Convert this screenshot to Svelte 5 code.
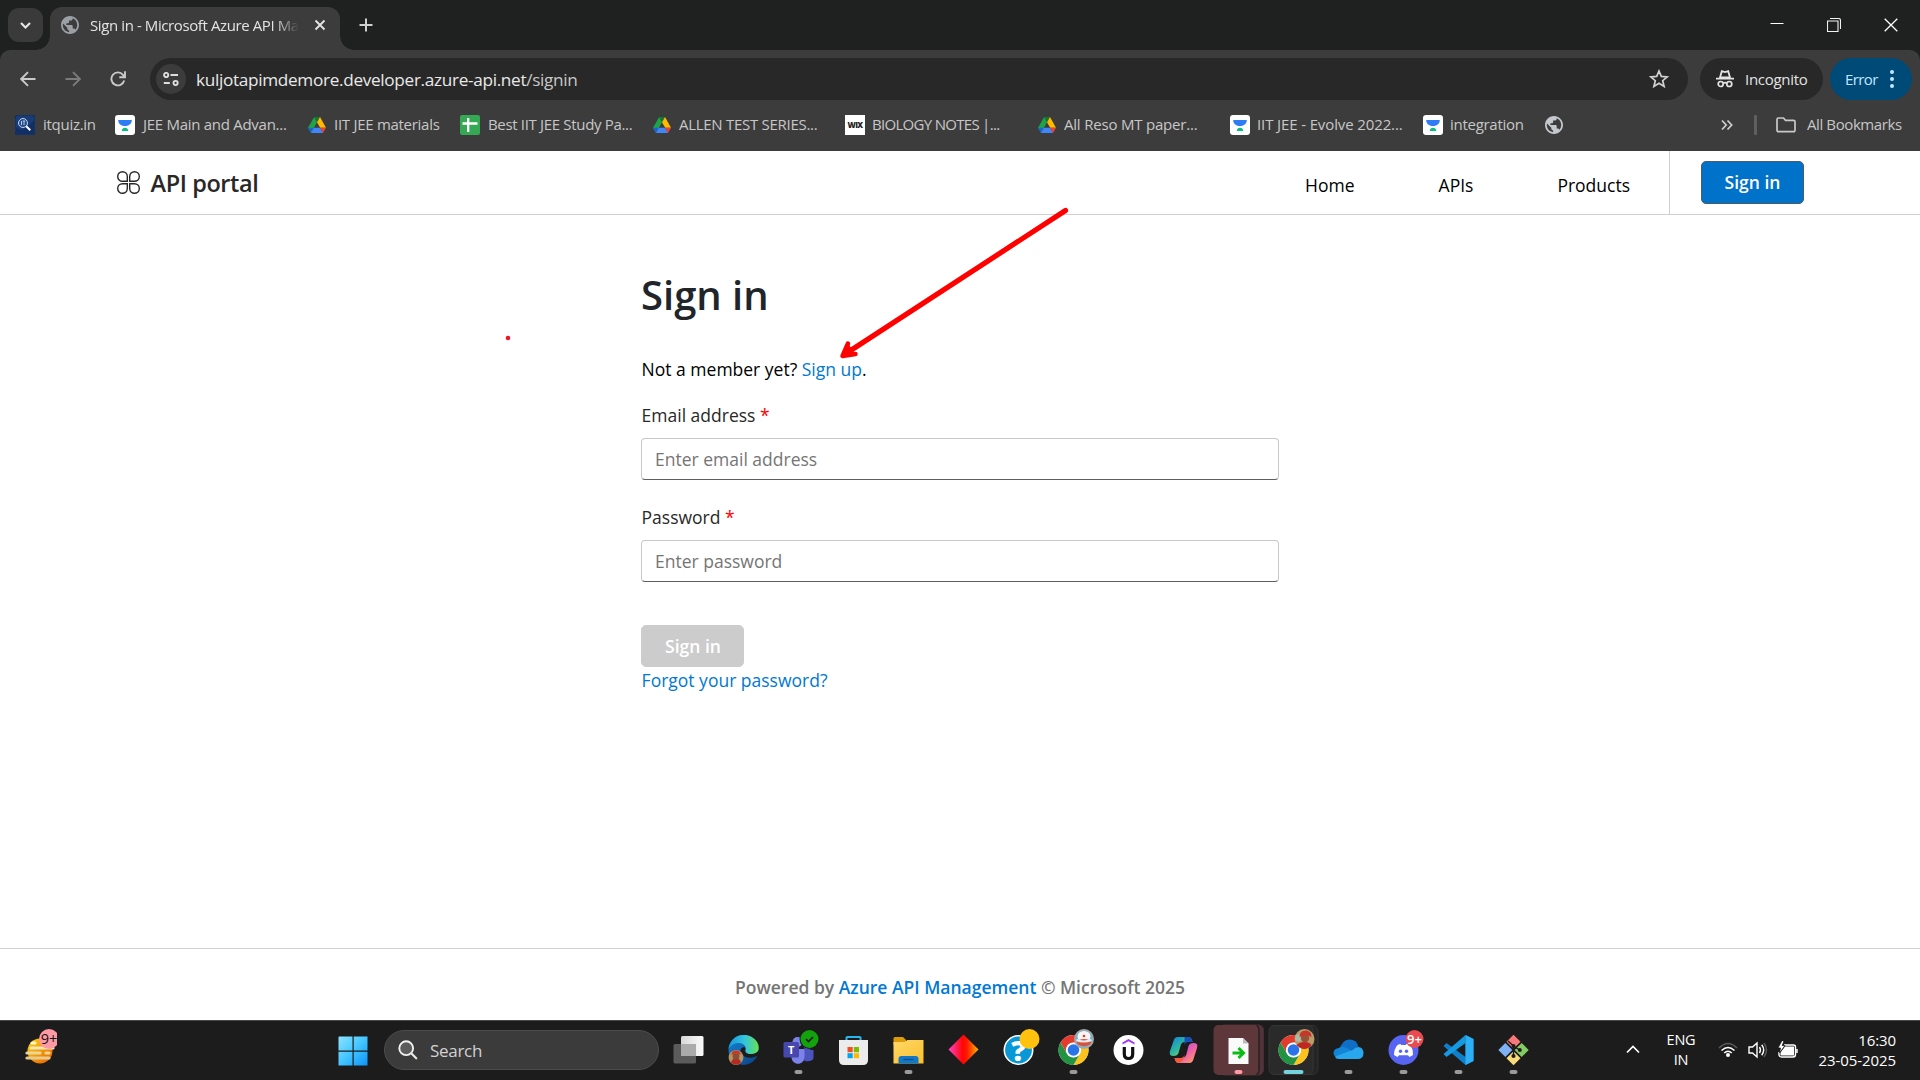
<script>
  const bookmarks = [
    { icon: 'quiz', label: 'itquiz.in' },
    { icon: 'academy', label: 'JEE Main and Advan...' },
    { icon: 'drive', label: 'IIT JEE materials' },
    { icon: 'sheet', label: 'Best IIT JEE Study Pa...' },
    { icon: 'drive', label: 'ALLEN TEST SERIES...' },
    { icon: 'wix', label: 'BIOLOGY NOTES |...' },
    { icon: 'drive', label: 'All Reso MT paper...' },
    { icon: 'academy', label: 'IIT JEE - Evolve 2022...' },
    { icon: 'academy', label: 'integration' },
    { icon: 'globe', label: '' }
  ];
  const apps = [
    { name: 'taskview' },
    { name: 'edge' },
    { name: 'teams', open: true },
    { name: 'store' },
    { name: 'explorer', open: true },
    { name: 'diamond' },
    { name: 'help' },
    { name: 'chrome', open: true },
    { name: 'udemy' },
    { name: 'copilot' },
    { name: 'transfer', alert: true },
    { name: 'chromeActive', active: true },
    { name: 'onedrive', open: true },
    { name: 'discord', open: true },
    { name: 'vscode', open: true },
    { name: 'git', open: true }
  ];
  const links = ['Home', 'APIs', 'Products'];
</script>

{#snippet globe(color)}
  <svg class="i18" viewBox="2 2 20 20">
    <path d="M12 2C6.480 2 2 6.480 2 12s4.480 10 10 10 10-4.480 10-10S17.520 2 12 2zm-1 17.930c-3.950-.49-7-3.850-7-7.930 0-.62.080-1.210.210-1.790L9 15v1c0 1.100.9 2 2 2v1.930zm6.900-2.540c-.26-.81-1-1.390-1.900-1.390h-1v-3c0-.55-.45-1-1-1H8v-2h2c.55 0 1-.45 1-1V7h2c1.100 0 2-.9 2-2v-.41c2.930 1.190 5 4.060 5 7.410 0 2.080-.8 3.970-2.100 5.390z" fill={color} />
  </svg>
{/snippet}

{#snippet chromeMark()}
  <circle r="15" fill="#fff" />
  <path d="M-13-7.500A15 15 0 0 1 13-7.500H0A7.500 7.500 0 0 0-6.500 3.750Z" fill="#e33b2e" />
  <path d="M13-7.500A15 15 0 0 1 0 15L6.500 3.750A7.500 7.500 0 0 0 0-7.500Z" fill="#fcc31e" />
  <path d="M0 15A15 15 0 0 1-13-7.500L-6.500 3.750A7.500 7.500 0 0 0 6.500 3.750Z" fill="#229342" />
  <circle r="7.300" fill="#fff" /><circle r="5.800" fill="#2b74e8" />
{/snippet}

<div class="screen">
  <div class="tabs">
    <div class="tabsearch"><svg width="11" height="7" viewBox="0 0 11 7"><path d="m1 1 4.500 4.500L10 1" fill="none" stroke="#e6e6e6" stroke-width="2.100" /></svg></div>
    <div class="tab">
      {@render globe('#9aa0a6')}
      <span class="tabtitle">Sign in - Microsoft Azure API Ma</span>
      <svg class="close" width="12" height="12" viewBox="0 0 12 12"><path d="m1.500 1.500 9 9m0-9-9 9" stroke="#e3e3e3" stroke-width="1.900" /></svg>
    </div>
    <svg class="plus" width="14" height="14" viewBox="0 0 14 14"><path d="M7 .5v13M.5 7h13" stroke="#d0d0d0" stroke-width="2" /></svg>
    <div class="winctl">
      <svg width="14" height="14" viewBox="0 0 14 14"><path d="M.5 5.500h13" stroke="#fff" /></svg>
      <svg width="14" height="14" viewBox="0 0 14 14"><path d="M.5 3h10.500v10.500H.5ZM3 .5h8.500q2 0 2 2V11" fill="none" stroke="#f2f2f2" stroke-width="1.100" /></svg>
      <svg width="14" height="14" viewBox="0 0 14 14"><path d="m.7.7 12.600 12.600m0-12.600L.7 13.300" stroke="#fff" stroke-width="1.300" /></svg>
    </div>
  </div>

  <div class="toolbarback">
    <div class="toolbar">
      <svg class="nav" viewBox="0 0 16 16"><path d="M15.500 8H1.500M8 1.200 1.200 8 8 14.800" fill="none" stroke="#c9c9c9" stroke-width="1.900" /></svg>
      <svg class="nav" viewBox="0 0 16 16"><path d="M.5 8h14M8 1.200 14.800 8 8 14.800" fill="none" stroke="#7b7b7b" stroke-width="1.900" /></svg>
      <svg class="nav" viewBox="0 0 16 16"><path d="M14.200 9.500A6.500 6.500 0 1 1 13 3.800L14.500 6M9.300 6.200H15V.3" fill="none" stroke="#c9c9c9" stroke-width="1.900" /></svg>
      <div class="omnibox">
        <div class="site"><svg width="16" height="14" viewBox="0 0 16 14"><g fill="none" stroke="#dedede" stroke-width="1.900"><circle cx="3.200" cy="3" r="2.100" /><path d="M7.500 3H15M.8 11h6" /><circle cx="12.600" cy="11" r="2.100" /></g></svg></div>
        <span class="url">kuljotapimdemore.developer.azure-api.net<i>/signin</i></span>
        <svg class="star" width="20" height="20" viewBox="0 0 20 20"><path d="m10 2 2.300 5.400 5.900.5-4.500 3.800 1.400 5.700L10 14.300l-5.100 3.100 1.400-5.700L1.800 7.900l5.900-.5Z" fill="none" stroke="#d2d2d2" stroke-width="1.700" /></svg>
      </div>
      <div class="incog">
        <svg width="18" height="18" viewBox="0 0 18 18"><path d="M4 7.500 5.800 1.200 9 2l3.200-.8L14 7.500Z" fill="none" stroke="#e3e3e3" stroke-width="1.800" /><path d="M0 8.700h18M7 13.400q2-1.400 4 0" fill="none" stroke="#e3e3e3" stroke-width="1.800" /><circle cx="4.700" cy="14" r="2.500" fill="none" stroke="#e3e3e3" stroke-width="1.700" /><circle cx="13.300" cy="14" r="2.500" fill="none" stroke="#e3e3e3" stroke-width="1.700" /></svg>
        <span>Incognito</span>
      </div>
      <div class="error"><span>Error</span><svg width="4" height="18" viewBox="0 0 4 18" fill="#c2e7ff"><circle cx="2" cy="2" r="2" /><circle cx="2" cy="9" r="2" /><circle cx="2" cy="16" r="2" /></svg></div>
    </div>
    <div class="bookmarks">
      <div class="bmgrid">
        {#each bookmarks as b}
          <div class="bm">
            {#if b.icon === 'globe'}
              {@render globe('#c4c7cb')}
            {:else if b.icon === 'drive'}
              <svg class="i18" viewBox="0 0 18 18"><path d="M6.200 1 0 11.800 3 17 9 6.300Z" fill="#1ea446" /><path d="M6.200 1h5.800L9 6.300Z" fill="#0d7a34" /><path d="M12 1 9 6.300 12.200 11.800H18Z" fill="#ffba00" /><path d="M0 11.800 3 17 5.900 11.800Z" fill="#1b62d2" /><path d="M5.900 11.800H12.200L15 17H3Z" fill="#4285f4" /><path d="M12.200 11.800H18L15 17Z" fill="#ea4335" /></svg>
            {:else}
              <svg class="i20" viewBox="0 0 20 20">
                {#if b.icon === 'quiz'}
                  <rect width="20" height="20" rx="3" fill="#183c78" stroke="#112b57" /><path d="M1 12Q8 20 19 5v12q0 2-2 2H3q-2 0-2-2Z" fill="#122f63" />
                  <circle cx="8" cy="8" r="4.500" fill="#234d8b" stroke="#c6d3e8" stroke-width="1" /><path d="m11.300 11.300 4 4" stroke="#fff" stroke-width="2" /><path d="M6.500 6v4M9 6v4M7.800 6h2.500" stroke="#dfe7f3" stroke-width=".8" />
                {:else if b.icon === 'academy'}
                  <rect width="20" height="20" rx="3" fill="#fff" /><path d="M3.200 5h13.600c0 3.500-2.500 6-6.800 6s-6.800-2.500-6.800-6Z" fill="#2e7df6" /><path d="M6.700 16c.3-4.300 6.300-4.300 6.600 0Z" fill="#09bd83" />
                {:else if b.icon === 'sheet'}
                  <rect width="20" height="20" rx="2" fill="#34a853" /><path d="M8.200 3v14M2.500 8.500h15" stroke="#fff" stroke-width="2.300" />
                {:else}
                  <rect width="20" height="20" fill="#fff" /><text x="10" y="13" text-anchor="middle" class="wix">WIX</text>
                {/if}
              </svg>
            {/if}
            <span>{b.label}</span>
          </div>
        {/each}
      </div>
      <svg width="12" height="12" viewBox="0 0 12 12"><path d="m1 1.500 4.200 4.500L1 10.500m5.500-9L10.700 6l-4.200 4.500" fill="none" stroke="#cfcfcf" stroke-width="1.700" /></svg>
      <b class="divider"></b>
      <svg width="20" height="16" viewBox="0 0 20 16"><path d="M1 13V2.500Q1 1 2.500 1h5l2 2.300h8Q19 3.300 19 4.800V13q0 1.700-1.700 1.700H2.700Q1 14.700 1 13Z" fill="none" stroke="#c9c9c9" stroke-width="1.700" /></svg>
      <span class="allbm">All Bookmarks</span>
    </div>
  </div>

  <header>
    <svg class="logo" width="23" height="23" viewBox="0 0 23 23"><g fill="none" stroke="#292827" stroke-width="1.400"><path d="M10.300 10.300H5.500A4.800 4.800 0 1 1 10.300 5.500Z" /><path d="M12.700 10.300V5.500A4.800 4.800 0 1 1 17.500 10.300Z" /><path d="M10.300 12.700v4.800A4.800 4.800 0 1 1 5.500 12.700Z" /><path d="M12.700 12.700h4.800A4.800 4.800 0 1 1 12.700 17.500Z" /></g></svg>
    <span class="brand">API portal</span>
    <nav>{#each links as l}<a href="#{l}">{l}</a>{/each}</nav>
    <div class="account"><button class="primary">Sign in</button></div>
  </header>

  <main>
    <form>
      <h1>Sign in</h1>
      <p class="member">Not a member yet? <a href="#signup">Sign up</a>.</p>
      <label for="email">Email address <em>*</em></label>
      <input id="email" placeholder="Enter email address" />
      <label for="pw" class="second">Password <em>*</em></label>
      <input id="pw" placeholder="Enter password" />
      <button type="button" class="muted">Sign in</button>
      <a class="forgot" href="#forgot">Forgot your password?</a>
    </form>
  </main>

  <footer><span>Powered by <a href="#azure">Azure API Management</a> © Microsoft 2025</span></footer>

  <div class="taskbar">
    <svg class="widget" width="32" height="38" viewBox="0 0 32 38">
      <defs><linearGradient id="sun" x1="0" y1="0" x2="1" y2="1"><stop offset="0" stop-color="#ffd60a" /><stop offset="1" stop-color="#e85d04" /></linearGradient></defs>
      <circle cx="15" cy="22" r="12.500" fill="url(#sun)" />
      <g stroke-linecap="round" stroke-width="3.200" stroke="#f4e6b8"><path d="M7 14h3" stroke="#fff7c8" /><path d="M6 19h22" /><path d="M2 24h13M21 24h3" stroke="#ecd79b" /><path d="M2 29h22" stroke="#e7cb8d" /></g>
      <circle cx="24" cy="10" r="10" fill="#ff99a4" /><text x="24" y="15" text-anchor="middle" class="nine">9+</text>
    </svg>
    <svg class="start" width="30" height="30" viewBox="0 0 30 30">
      <defs><linearGradient id="win" x1="0" y1="0" x2="30" y2="30" gradientUnits="userSpaceOnUse"><stop offset="0" stop-color="#8fe4ff" /><stop offset=".5" stop-color="#43c6ff" /><stop offset="1" stop-color="#0a91f7" /></linearGradient></defs>
      <path d="M1 .5h13.500v14H.5V1ZM15.700.5h13.800v14H15.700ZM.5 15.700h14v13.800H.5ZM15.700 15.700h13.800v13.800H15.700Z" fill="url(#win)" />
    </svg>
    <div class="search">
      <svg width="20" height="20" viewBox="0 0 20 20"><circle cx="8.200" cy="8.200" r="6.900" fill="#5c5c5c" stroke="#f2f2f2" stroke-width="1.900" /><path d="m13.200 13.200 5 5" stroke="#e5e5e5" stroke-width="2.300" stroke-linecap="round" /></svg>
      <span>Search</span>
    </div>
    <div class="apps">
      {#each apps as a}
        <svg width="55" height="60" viewBox="-27.500 -30 55 60">
          {#if a.name === 'taskview'}
            <defs><linearGradient id="tv"><stop offset="0" stop-color="#d8d8d8" /><stop offset="1" stop-color="#fafafa" /></linearGradient></defs>
            <rect x="-15" y="-6" width="22.500" height="19.500" rx="1.500" fill="#5b5b5b" /><rect x="-7.500" y="-14" width="22.500" height="20" rx="1.500" fill="url(#tv)" /><path d="M-7.500-6h15V6h-13.500q-1.500 0-1.500-1.500Z" fill="#ababab" />
          {:else if a.name === 'edge'}
            <defs><linearGradient id="ed1"><stop offset="0" stop-color="#1598df" /><stop offset=".55" stop-color="#35c5da" /><stop offset="1" stop-color="#68e24f" /></linearGradient><linearGradient id="ed2" x2=".8" y2="1"><stop offset="0" stop-color="#1587d8" /><stop offset="1" stop-color="#0d4488" /></linearGradient></defs>
            <circle r="15" fill="url(#ed2)" />
            <path d="M-15-1C-14-9-8-15 0-15c10 0 17 8 15 15-2 6-12 5-13 2-1-2 1-2 0-5C0-8-10-9-15-1Z" fill="url(#ed1)" />
            <path d="M1-3C-3-3-4 1-2 4c3 4 9 5 15.500 2q1.500-1-.5 2L16 3 15 0C14 5 3 5 2 2 1 0 3-1 1-3Z" fill="#1c1c1c" />
            <path d="M-9 0C-7-5-3-6-1-4c-5 3-6 9 0 14l-6 2Z" fill="#126fc0" />
            <circle cx="-7.500" cy="7.500" r="7.400" fill="#b39463" /><path d="M-12.500 12.500q1-4 5-4t5 4q-5 4.500-10 0Z" fill="#b52a24" /><circle cx="-7.500" cy="6.500" r="3.300" fill="#8c4e32" /><path d="M-12 5q0-4.500 4.500-4.500T-3 5q-4-2.500-9 0Z" fill="#c33a2d" />
          {:else if a.name === 'teams'}
            <circle cx="9" cy="-3" r="3.500" fill="#4b53bc" /><path d="M4 0h11v8q-1 4-9 3Z" fill="#4b53bc" /><circle cx="-1" cy="-8" r="5" fill="#7b83eb" /><path d="M-7-1H6v8c0 9-13 9-13 0Z" fill="#7b83eb" />
            <rect x="-15" y="-8" width="15.500" height="15.500" rx="1.500" fill="#4648ad" /><text x="-7.300" y="4" text-anchor="middle" class="tee">T</text>
            <circle cx="11" cy="-11" r="10" fill="#1c1c1c" /><circle cx="11" cy="-11" r="9" fill="#13a10e" /><path d="m7.500-11 2.500 2.500 4.500-4.500" fill="none" stroke="#1c1c1c" stroke-width="1.700" />
          {:else if a.name === 'store'}
            <path d="M-7-9v-3.500Q-7-13-6-13H6q1 0 1 .5V-9" fill="none" stroke="#2bb5ee" stroke-width="2" /><path d="M-14.500-10h29V10q0 5-5 5h-19q-5 0-5-5Z" fill="#ececec" />
            <path d="M-6-3h5.200v5.200H-6Z" fill="#f25022" /><path d="M.3-3h5.200v5.200H.3Z" fill="#7fba00" /><path d="M-6 3.200h5.200v5H-6Z" fill="#00a4ef" /><path d="M.3 3.200h5.200v5H.3Z" fill="#ffb900" />
          {:else if a.name === 'explorer'}
            <defs><linearGradient id="fold" y2="1"><stop offset="0" stop-color="#ffd968" /><stop offset="1" stop-color="#fbbf2e" /></linearGradient></defs>
            <path d="M-15-5v-6.500Q-15-13-13.500-13h8l3 3V-5Z" fill="#dc9b0a" /><path d="M-15-8h11l3-2h16v23.500h-30Z" fill="url(#fold)" /><path d="M-10 13.500V9q0-3 3-3H7q3 0 3 3v4.500Z" fill="#1178c8" /><path d="M-5 9.500H5" stroke="#0b4a85" stroke-width="1.200" />
          {:else if a.name === 'diamond'}
            <defs><linearGradient id="dia"><stop offset="0" stop-color="#ff45c8" /><stop offset=".47" stop-color="#ff0505" /><stop offset=".62" stop-color="#ff1a00" /><stop offset="1" stop-color="#ffb500" /></linearGradient></defs>
            <path d="M0-15.500 15-.5 0 14.500-15-.5Z" fill="url(#dia)" />
          {:else if a.name === 'help'}
            <circle r="14.200" fill="#0998d5" stroke="#fff" stroke-width="1.600" /><text y="10.500" text-anchor="middle" class="qmark">?</text><circle cx="11" cy="-11" r="10" fill="#ffc20e" />
          {:else if a.name === 'chrome'}
            {@render chromeMark()}
            <circle cx="10.500" cy="-11" r="10" fill="#a8a6a4" /><circle cx="10.500" cy="-11" r="8.300" fill="#65b4cf" /><ellipse cx="10.500" cy="-13.500" rx="6.500" ry="5.500" fill="#f5f5f5" /><ellipse cx="10.500" cy="-7.500" rx="7" ry="3.600" fill="#d9503e" /><circle cx="10.500" cy="-14" r="1.300" fill="#d73e31" /><path d="M3-10q7 3 15 0" fill="none" stroke="#eee" stroke-width="2" />
          {:else if a.name === 'udemy'}
            <circle r="15" fill="#fff" /><path d="M-6-5.500V-7.500L0-11 6-7.500v2L0-8.700Z" fill="#a435f0" /><path d="M-4.200-3V4q0 4.500 4.200 4.500T4.200 4v-7" fill="none" stroke="#111" stroke-width="3.200" />
          {:else if a.name === 'copilot'}
            <defs><linearGradient id="co1" y2="1"><stop offset="0" stop-color="#147de8" /><stop offset=".5" stop-color="#2dbb99" /><stop offset="1" stop-color="#f3dc25" /></linearGradient><linearGradient id="co2" y2="1"><stop offset="0" stop-color="#8a52f5" /><stop offset=".55" stop-color="#ef5fa8" /><stop offset="1" stop-color="#ffae55" /></linearGradient></defs>
            <path d="M-6-13H5q3 0 4 5H1q-3 0-4 4l-2 7q-1 3-5 3-5 0-3.500-5L-10-9q1-4 4-4Z" fill="url(#co1)" /><path d="M5-13q3 0 4 5H5q-3 0-4 3Q1-13 1-13Z" fill="#1550b8" />
            <path d="M6 13H-5q-3 0-4-5h7q4 0 5-4l2-8q1-3 5-3 5 0 3.500 5L10 9q-1 4-4 4Z" fill="url(#co2)" /><path d="M-9 8h6q3 0 4-3v1q-2 7-6 7-3 0-4-5Z" fill="#f35c3b" />
          {:else if a.name === 'transfer'}
            <rect x="-19" y="-25" width="44" height="50" rx="5" fill="#51343a" stroke="#4c2d31" /><rect x="-25" y="-25" width="45" height="50" rx="5" fill="#5e373b" /><path d="M18-24.500q2.500 1 2.500 5v39q0 4-2.500 5" fill="none" stroke="#1c1c1c" stroke-width="1.200" />
            <path d="M-10-12H4.500L10-6.500V14h-20Z" fill="#fafafa" /><path d="M4.500-12v5.500H10Z" fill="#bbb" /><path d="M-6 3H3M0-2l5 5-5 5" fill="none" stroke="#0dbb16" stroke-width="3" />
          {:else if a.name === 'chromeActive'}
            <rect x="-19" y="-24.500" width="43.500" height="49" rx="5" fill="#242424" stroke="#303030" /><rect x="-24.500" y="-24.500" width="44" height="49" rx="5" fill="#2a2a2a" stroke="#353535" />
            {@render chromeMark()}
            <circle cx="11" cy="-11" r="10" fill="#b99b6a" /><circle cx="5" cy="-12" r="3.500" fill="#a9bca8" /><path d="M3-5Q6-8 11-8t7 3Q11 3 3-5Z" fill="#c02721" /><circle cx="11.500" cy="-12" r="4.200" fill="#9b5135" /><path d="M6-13q0-6.500 6-6.500t6 6.500q-6-3.500-12 0Z" fill="#c7352b" />
          {:else if a.name === 'onedrive'}
            <path d="M-9 0Q-7-10 1-10.500q7 0 9 7L-3 4Z" fill="#0f6fc6" /><path d="M-10-2Q-4-5 3 1L-9 8q-6-1-6-5 0-4 5-5Z" fill="#1385d6" /><path d="M4 0q4-4 8-2.500Q15-1 15 3q0 6-6 6H-9.500Q-13 9-13.500 6.500Z" fill="#29a7ee" />
          {:else if a.name === 'discord'}
            <circle r="15" fill="#5865f2" /><path d="M-6-5q3-1.500 3-1l.8 1H2.200L3-6q3 .5 4 1 3 5 2.500 10L6 7 4.500 5.200h-9L-6 7l-3.500-2Q-9.500-1-6-5Z" fill="#fff" /><circle cx="-3" cy="1.200" r="1.700" fill="#5865f2" /><circle cx="3" cy="1.200" r="1.700" fill="#5865f2" />
            <circle cx="11" cy="-11" r="9" fill="#e94b50" /><text x="11" y="-6.500" text-anchor="middle" class="badge">9+</text>
          {:else if a.name === 'vscode'}
            <path d="M7-15 15-11V11L7 15-15-4l3-3L7 7Z" fill="#0f7fcb" /><path d="M7-15-15 4l3 3L7-7Z" fill="#159ae2" /><path d="M7-15 15-11V11L7 15Z" fill="#2bb0f5" />
          {:else if a.name === 'git'}
            <path d="m0-15.300 7 7L0-1.300l-7-7Z" fill="#f77a7a" /><path d="m8.200-7 7 7-7 7-7-7Z" fill="#84cd62" /><path d="m-8.200-7 7 7-7 7-7-7Z" fill="#7fb2f5" /><path d="m0 1.300 7 7-7 7-7-7Z" fill="#fbdc7a" />
            <path d="M-5.500-9 0-4V6M0-4l6 4" fill="none" stroke="#1c1c1c" stroke-width="1.400" /><circle cy="-4" r="2" fill="#1c1c1c" /><circle cy="6" r="2.100" fill="#1c1c1c" /><circle cx="6.300" cy="0" r="2" fill="#1c1c1c" />
          {/if}
          {#if a.open}<rect x="-4" y="20" width="8" height="4" rx="2" fill="#9a9a9a" />{/if}
          {#if a.alert}<rect x="-4" y="20" width="8" height="4" rx="2" fill="#ff99a4" />{/if}
          {#if a.active}<rect x="-10" y="20" width="20" height="4" rx="2" fill="#73d2dc" />{/if}
        </svg>
      {/each}
    </div>
    <div class="tray">
      <svg width="14" height="9" viewBox="0 0 14 9"><path d="m1 7.500 6-6 6 6" fill="none" stroke="#fff" stroke-width="1.700" /></svg>
      <div class="lang"><span>ENG</span><span>IN</span></div>
      <svg class="wifi" width="20" height="16" viewBox="0 0 20 16" fill="none" stroke-width="1.500"><path d="M1 6Q10-3 19 6" stroke="#5a5a5a" /><path d="M3.500 8.500q6.500-6 13 0M6.200 11q3.800-3.500 7.600 0" stroke="#fff" /><circle cx="10" cy="13" r="2" fill="#fff" /></svg>
      <svg class="speaker" width="20" height="18" viewBox="0 0 20 18" fill="none" stroke="#fff" stroke-width="1.400"><path d="M1 6h3.500L9 2v14l-4.500-4H1Z" /><path d="M11.500 6q2 3 0 6M13.700 3.800q4 5.200 0 10.400" /><path d="M16 2q5 7 0 14" stroke="#5a5a5a" /></svg>
      <svg class="battery" width="20" height="18" viewBox="0 0 20 18"><path d="M6 4h9.500q2 0 2 2v7.500q0 2.500-2.500 2.500H3.500Q1 16 1 13.500V11" fill="none" stroke="#fff" stroke-width="1.400" /><path d="M7 5.500h9v9H2.500v-3ZM18.200 8h1.500v4h-1.500Z" fill="#fff" /><path d="M4-.5 0 7h2.500L1.500 12 7 4.500H4.200L6 0Z" fill="#fff" stroke="#1c1c1c" stroke-width=".8" /></svg>
      <div class="clock"><span>16:30</span><span>23-05-2025</span></div>
    </div>
  </div>

  <svg class="annotation" width="1920" height="1080" viewBox="0 0 1920 1080"><path d="M1065.500 210.500 846 353.500" stroke="#f00" stroke-width="5.200" stroke-linecap="round" /><path d="m848 343.500-5.500 12.500 13-2" fill="#f00" stroke="#f00" stroke-width="4.500" stroke-linecap="round" stroke-linejoin="round" /><circle cx="508" cy="338" r="2.300" fill="#f01528" /></svg>
</div>

<style>
  :global(body) { margin: 0; background: #fff; overflow: hidden; }
  .screen { width: 1920px; height: 1080px; position: relative; display: flex; flex-direction: column; overflow: hidden; font-family: "Open Sans", "Noto Sans", sans-serif; background: #fff; }
  .screen * { box-sizing: border-box; }
  svg { display: block; flex: none; }
  span { white-space: nowrap; }
  a { color: #0078d4; text-decoration: none; }
  .i18 { width: 18px; height: 18px; }
  .i20 { width: 20px; height: 20px; }
  .tabs { height: 50px; flex: none; background: #1f2120; display: flex; align-items: center; padding-left: 8px; }
  .tabsearch { width: 35px; height: 34px; border-radius: 11px; background: #3a3a3a; display: flex; align-items: center; justify-content: center; }
  .tab { position: relative; align-self: flex-end; margin-left: 7px; width: 290px; height: 43px; border-radius: 12px 12px 0 0; background: #3c3c3c; display: flex; align-items: center; padding: 0 14px 7px 11px; }
  .tab::before, .tab::after { content: ''; position: absolute; bottom: 0; width: 14px; height: 14px; }
  .tab::before { left: -14px; background: radial-gradient(circle at 0 0, transparent 13.500px, #3c3c3c 14px); }
  .tab::after { right: -14px; background: radial-gradient(circle at 100% 0, transparent 13.500px, #3c3c3c 14px); }
  .tabtitle { margin-left: 11px; width: 209px; overflow: hidden; font-size: 15px; line-height: 22px; letter-spacing: -.4px; color: #e3e3e3; -webkit-mask-image: linear-gradient(90deg, #000 185px, transparent 209px); }
  .close { margin-left: auto; }
  .plus { margin-left: 18.500px; }
  .winctl { margin-left: auto; display: flex; gap: 43px; padding-right: 22px; }
  .toolbarback { height: 101px; flex: none; background: #1f2120; }
  .toolbar { height: 58px; background: #3c3c3c; border-radius: 10px 10px 0 0; display: flex; align-items: center; padding: 0 8px 0 20px; }
  .nav { width: 16px; height: 16px; margin: 0 29px 1px 0; }
  .nav:nth-child(3) { margin-right: 24px; }
  .omnibox { width: 1538px; height: 42px; border-radius: 21px; background: #282828; display: flex; align-items: center; padding: 0 19px 0 6px; }
  .site { width: 30px; height: 30px; border-radius: 50%; background: #3c3c3c; display: flex; align-items: center; justify-content: center; }
  .url { margin: 1px 0 0 10px; font-size: 17.200px; line-height: 24px; letter-spacing: -.32px; color: #e9e9e9; }
  .url i { font-style: normal; color: #c7c7c7; }
  .star { margin-left: auto; }
  .incog { margin-left: 12px; width: 123px; height: 42px; border-radius: 21px; background: #282828; display: flex; align-items: center; padding: 0 0 1px 16px; gap: 11px; font-size: 15px; letter-spacing: -.3px; color: #e3e3e3; }
  .error { margin-left: 7px; width: 82px; height: 42px; border-radius: 21px; background: #004a77; display: flex; align-items: center; justify-content: space-between; padding: 0 18px 1px 15px; font-size: 15px; letter-spacing: -.6px; color: #c2e7ff; }
  .bookmarks { height: 43px; background: #3c3c3c; display: flex; align-items: center; padding: 0 0 10px 15px; font-size: 15px; color: #c7c7c7; }
  .bmgrid { width: 1706px; display: grid; grid-template-columns: 100px 193px 152px 193px 192px 193px 192px 193px 122px 1fr; }
  .bm { display: flex; align-items: center; gap: 8px; height: 22px; letter-spacing: -.28px; }
  .bm span { margin-bottom: 1px; }
  .bm:nth-child(4) { letter-spacing: -.33px; }
  .bm:nth-child(6) { gap: 7px; letter-spacing: -.7px; }
  .bm:nth-child(7) { letter-spacing: -.2px; }
  .bm:nth-child(8) { gap: 7px; letter-spacing: -.12px; }
  .bm:nth-child(9) { gap: 7px; }
  .wix { font: 800 8px "Open Sans", sans-serif; fill: #222; }
  .divider { width: 3px; height: 20px; margin: 0 19px 0 21px; background: #5f5f5f; border-radius: 1px; }
  .allbm { margin: 0 0 1px 11px; letter-spacing: -.4px; }
  header { height: 64px; flex: none; border-bottom: 1px solid #d1d1d1; display: flex; align-items: center; }
  .logo { margin: 0 0 1px 116.500px; }
  .brand { margin: 0 0 0 11px; font-size: 23.500px; font-weight: 600; letter-spacing: -.4px; color: #292827; }
  nav { margin-left: auto; display: flex; gap: 84px; padding: 5px 39px 0 0; font-size: 17.500px; line-height: 24px; }
  nav a { color: #000; }
  .account { width: 251px; height: 63px; border-left: 1px solid #d1d1d1; padding: 10px 0 0 31px; }
  button { width: 103px; height: 43px; border: 1px solid #4c5b68; border-radius: 5px; padding: 0; font: 600 17.500px "Open Sans", sans-serif; color: #fff; }
  .primary { background: #0072c9; padding-bottom: 2px; }
  main { height: 733px; flex: none; }
  form { margin-left: 641px; width: 638px; display: flex; flex-direction: column; }
  h1 { margin: 50px 0 0; font-size: 40px; line-height: 60px; font-weight: 600; color: #212529; }
  .member { margin: 32px 0 0; font-size: 17.500px; line-height: 24px; }
  .member, label, .forgot { padding-left: .6px; }
  label { margin-top: 22px; font-size: 17.500px; line-height: 24px; color: #292827; }
  label.second { margin-top: 25px; }
  em { font-style: normal; color: #f00; }
  input { margin-top: 11px; width: 638px; height: 42px; border: 1px solid #c8c8c8; border-bottom-color: #605e5c; border-radius: 4px; padding: 0 13px; font: 17.500px "Open Sans", sans-serif; color: #323130; background: #fff; }
  input::placeholder { color: #757575; opacity: 1; }
  .muted { margin-top: 43px; height: 42px; background: #ccc; border-color: #ccc; padding-left: 1px; }
  .forgot { margin-top: 1px; font-size: 17.500px; line-height: 24px; }
  footer { height: 72px; flex: none; border-top: 1px solid #d1d1d1; display: flex; align-items: center; justify-content: center; padding-top: 4px; font-size: 17.500px; font-weight: 600; color: #757575; }
  .taskbar { height: 60px; flex: none; background: #1c1c1c; border-top: 1px solid #45494a; display: flex; align-items: center; }
  .widget { margin: 0 0 6px 25px; }
  .nine { font: 14.500px "Open Sans", sans-serif; fill: #111; }
  .badge { font: 600 13px "Open Sans", sans-serif; fill: #fff; }
  .tee { font: 700 11px "Open Sans", sans-serif; fill: #fff; }
  .qmark { font: 800 29px "Open Sans", sans-serif; fill: #fff; }
  .start { margin-left: 280.500px; }
  .search { margin: 0 0 1px 16.500px; width: 275px; height: 40px; border-radius: 20px; background: #3b3b3b; border: 1px solid #4c4c4c; display: flex; align-items: center; padding-left: 13px; gap: 12px; font-size: 17px; color: #d2d2d2; letter-spacing: -.3px; }
  .apps { margin: 0 0 1px 2px; display: flex; }
  .tray { flex: 1; display: flex; align-items: center; padding: 0 24px 2px 0; margin-left: 85px; color: #fff; font-size: 14.500px; line-height: 20px; }
  .lang { width: 60px; margin-left: 11px; display: flex; flex-direction: column; align-items: center; letter-spacing: -.2px; }
  .wifi { margin-left: 7px; }
  .speaker { margin-left: 10px; }
  .battery { margin-left: 10px; }
  .clock { margin-left: auto; display: flex; flex-direction: column; align-items: flex-end; font-size: 15px; letter-spacing: -.08px; }
  .annotation { position: absolute; left: 0; top: 0; pointer-events: none; }
</style>
